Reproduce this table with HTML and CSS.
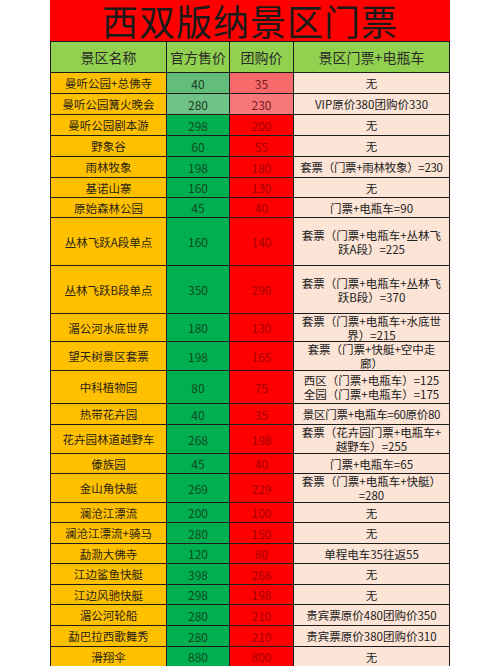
FILE: index.html
```html
<!DOCTYPE html>
<html lang="zh-CN">
<head>
<meta charset="utf-8">
<title>西双版纳景区门票</title>
<link rel="stylesheet" href="styles.css">
</head>
<body>
<div class="sheet">
  <div class="title">西双版纳景区门票</div>
  <div class="grid">
    <div class="hd">景区名称</div><div class="hd">官方售价</div><div class="hd">团购价</div><div class="hd">景区门票+电瓶车</div>

    <div class="nm">曼听公园+总佛寺</div><div class="of of-lt">40</div><div class="gp gp-lt">35</div><div class="ex">无</div>
    <div class="nm">曼听公园篝火晚会</div><div class="of of-lt2">280</div><div class="gp gp-lt2">230</div><div class="ex">VIP原价380团购价330</div>
    <div class="nm">曼听公园剧本游</div><div class="of">298</div><div class="gp">200</div><div class="ex">无</div>
    <div class="nm">野象谷</div><div class="of">60</div><div class="gp">55</div><div class="ex">无</div>
    <div class="nm">雨林牧象</div><div class="of">198</div><div class="gp">180</div><div class="ex tight">套票（门票+雨林牧象）=230</div>
    <div class="nm">基诺山寨</div><div class="of">160</div><div class="gp">130</div><div class="ex">无</div>
    <div class="nm">原始森林公园</div><div class="of">45</div><div class="gp">40</div><div class="ex">门票+电瓶车=90</div>
    <div class="nm">丛林飞跃A段单点</div><div class="of">160</div><div class="gp">140</div><div class="ex">套票（门票+电瓶车+丛林飞<br>跃A段）=225</div>
    <div class="nm">丛林飞跃B段单点</div><div class="of">350</div><div class="gp">290</div><div class="ex">套票（门票+电瓶车+丛林飞<br>跃B段）=370</div>
    <div class="nm">湄公河水底世界</div><div class="of">180</div><div class="gp">130</div><div class="ex">套票（门票+电瓶车+水底世<br>界）=215</div>
    <div class="nm">望天树景区套票</div><div class="of">198</div><div class="gp">165</div><div class="ex">套票（门票+快艇+空中走<br>廊）</div>
    <div class="nm">中科植物园</div><div class="of">80</div><div class="gp">75</div><div class="ex">西区（门票+电瓶车）=125<br>全园（门票+电瓶车）=175</div>
    <div class="nm">热带花卉园</div><div class="of">40</div><div class="gp">35</div><div class="ex tight">景区门票+电瓶车=60原价80</div>
    <div class="nm">花卉园林道越野车</div><div class="of">268</div><div class="gp">198</div><div class="ex">套票（花卉园门票+电瓶车+<br>越野车）=255</div>
    <div class="nm">傣族园</div><div class="of">45</div><div class="gp">40</div><div class="ex">门票+电瓶车=65</div>
    <div class="nm">金山角快艇</div><div class="of">269</div><div class="gp">229</div><div class="ex">套票（门票+电瓶车+快艇）<br>=280</div>
    <div class="nm">澜沧江漂流</div><div class="of">200</div><div class="gp">100</div><div class="ex">无</div>
    <div class="nm">澜沧江漂流+骑马</div><div class="of">280</div><div class="gp">150</div><div class="ex">无</div>
    <div class="nm">勐泐大佛寺</div><div class="of">120</div><div class="gp">80</div><div class="ex">单程电车35往返55</div>
    <div class="nm">江边鲨鱼快艇</div><div class="of">398</div><div class="gp">268</div><div class="ex">无</div>
    <div class="nm">江边风驰快艇</div><div class="of">298</div><div class="gp">198</div><div class="ex">无</div>
    <div class="nm">湄公河轮船</div><div class="of">280</div><div class="gp">210</div><div class="ex">贵宾票原价480团购价350</div>
    <div class="nm">勐巴拉西歌舞秀</div><div class="of">280</div><div class="gp">210</div><div class="ex">贵宾票原价380团购价310</div>
    <div class="nm">滑翔伞</div><div class="of">880</div><div class="gp">800</div><div class="ex">无</div>
  </div>
</div>
</body>
</html>
```

FILE: styles.css
```css
html, body {
  margin: 0;
  padding: 0;
  background: #ffffff;
}

body {
  font-family: "Noto Sans CJK SC", "Noto Sans", sans-serif;
  color: #222;
}

.sheet {
  width: 400px;
  margin: 0 auto;
}

.title {
  height: 41px;
  background: #ff0000;
  color: #1a1a1a;
  font-size: 36px;
  line-height: 41px;
  text-align: center;
  letter-spacing: 1px;
  white-space: nowrap;
}

.grid {
  display: grid;
  grid-template-columns: 115px 62px 63px 155px;
  grid-template-rows: 30px 20px 20px 20px 20px 20px 19px 19px 47px 47px 27px 28px 32px 20px 28px 19px 28px 19px 20px 19px 20px 19px 20px 20px 19px;
  gap: 1px;
  background: #1c1c1c;
  border-top: 1px solid #1c1c1c;
  border-left: 1px solid #1c1c1c;
  border-right: 1px solid #1c1c1c;
}

.grid > div {
  display: flex;
  align-items: center;
  justify-content: center;
  text-align: center;
  white-space: nowrap;
  overflow: visible;
}

.hd {
  background: #92d050;
  font-size: 14px;
  color: #2a2a2a;
}

.nm {
  background: #ffc000;
  font-size: 11.5px;
  color: #2a2412;
}

.of {
  background: #00b050;
  font-size: 12px;
  color: #0f4a22;
}

.of-lt {
  background: #63be7b;
  color: #1c3d24;
}

.of-lt2 {
  background: #6fc386;
  color: #1c3d24;
}

.gp {
  background: #ff0000;
  font-size: 12px;
  color: #a30000;
}

.gp-lt {
  background: #f8696b;
  color: #7a1a1a;
}

.gp-lt2 {
  background: #f8787a;
  color: #7a1a1a;
}

.ex {
  background: #fce4d6;
  font-size: 11.5px;
  line-height: 14px;
  color: #222;
}

.tight {
  letter-spacing: -0.3px;
}
```
